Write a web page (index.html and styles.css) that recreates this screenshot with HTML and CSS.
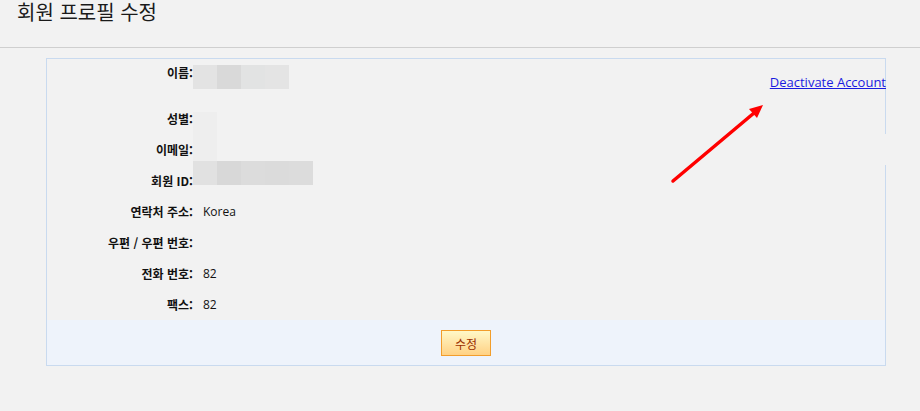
FILE: index.html
```html
<!DOCTYPE html>
<html lang="ko">
<head>
<meta charset="utf-8">
<title>회원 프로필 수정</title>
<link rel="stylesheet" href="styles.css">
</head>
<body>
<header class="page-head">
  <h1 class="page-title">회원 프로필 수정</h1>
</header>
<main class="content">
  <section class="profile-box">
    <div class="rows">
      <div class="row row-first">
        <div class="label">이름:</div>
        <div class="value"></div>
        <a class="deactivate" href="#">Deactivate Account</a>
      </div>
      <div class="row"><div class="label">성별:</div><div class="value"></div></div>
      <div class="row"><div class="label">이메일:</div><div class="value"></div></div>
      <div class="row"><div class="label">회원 ID:</div><div class="value"></div></div>
      <div class="row"><div class="label">연락처 주소:</div><div class="value">Korea</div></div>
      <div class="row"><div class="label">우편 / 우편 번호:</div><div class="value"></div></div>
      <div class="row"><div class="label">전화 번호:</div><div class="value">82</div></div>
      <div class="row"><div class="label">팩스:</div><div class="value">82</div></div>
    </div>
    <div class="actions">
      <button class="btn-edit" type="button">수정</button>
    </div>

    <div class="blur blur-name"><span class="b1"></span><span class="b2"></span><span class="b3"></span><span class="b4"></span></div>
    <div class="blur blur-faint"></div>
    <div class="blur blur-id"><span class="c1"></span><span class="c2"></span><span class="c3"></span><span class="c4"></span><span class="c5"></span></div>
    <div class="border-gap"></div>

    <svg class="arrow" width="110" height="90" viewBox="0 0 110 90" aria-hidden="true">
      <line x1="13" y1="82" x2="94" y2="14" stroke="#ff0000" stroke-width="3.5" stroke-linecap="round"/>
      <polygon points="103,6 89,10 97,19" fill="#ff0000"/>
    </svg>
  </section>
</main>
</body>
</html>
```

FILE: styles.css
```css
html, body {
  margin: 0;
  padding: 0;
}
body {
  background: #f2f2f2;
  font-family: "Noto Sans CJK KR", "Noto Sans", sans-serif;
  font-size: 12px;
  color: #111;
  width: 920px;
  height: 411px;
  overflow: hidden;
}
.page-head {
  height: 48px;
  border-bottom: 1px solid #cfcfcf;
  box-sizing: border-box;
  padding-top: 2px;
}
.page-title {
  margin: 0;
  padding-left: 17px;
  font-size: 20px;
  font-weight: normal;
  line-height: 20px;
  color: #1a1a1a;
}
.content {
  padding-top: 10px;
  padding-left: 46px;
}
.profile-box {
  position: relative;
  width: 840px;
  box-sizing: border-box;
  border: 1px solid #c9daef;
  background: #f2f2f2;
}
.rows {
  display: flex;
  flex-direction: column;
}
.row {
  display: grid;
  grid-template-columns: 146px 1fr auto;
  column-gap: 10px;
  height: 31px;
  line-height: 31px;
  align-items: start;
}
.row-first {
  height: 44px;
  line-height: 28px;
}
.label {
  text-align: right;
  font-weight: 700;
  color: #111;
  white-space: nowrap;
}
.value {
  font-family: "Open Sans", "Noto Sans CJK KR", sans-serif;
  color: #111;
}
.deactivate {
  font-family: "Open Sans", "Noto Sans CJK KR", sans-serif;
  font-size: 13px;
  color: #1a1ae0;
  text-decoration: underline;
  padding-top: 9px;
  margin-right: -1px;
  line-height: 28px;
}
.actions {
  height: 45px;
  background: #eef3fb;
  display: flex;
  justify-content: center;
  align-items: flex-start;
  padding-top: 10px;
  box-sizing: border-box;
}
.btn-edit {
  width: 50px;
  height: 26px;
  border: 1px solid #f29d2b;
  background: linear-gradient(#fff8c8, #ffd184);
  color: #9a2f00;
  font-family: "Noto Sans CJK KR", sans-serif;
  font-size: 12px;
  padding: 0;
  cursor: pointer;
}
.blur {
  position: absolute;
  display: flex;
}
.blur span {
  width: 24px;
  height: 24px;
}
.blur-name { left: 146px; top: 6px; }
.blur-name .b1 { background: #e3e3e3; }
.blur-name .b2 { background: #d9d9d9; }
.blur-name .b3 { background: #e2e3e3; }
.blur-name .b4 { background: #e4e4e4; }
.blur-faint {
  left: 146px;
  top: 53px;
  width: 24px;
  height: 49px;
  background: #eeeeee;
}
.blur-id { left: 146px; top: 102px; }
.blur-id .c1 { background: #e1e1e1; }
.blur-id .c2 { background: #d8d8d8; }
.blur-id .c3 { background: #dcdcdc; }
.blur-id .c4 { background: #dbdbdb; }
.blur-id .c5 { background: #dcdcdc; }
.border-gap {
  position: absolute;
  right: -1px;
  top: 75px;
  width: 1px;
  height: 31px;
  background: #f2f2f2;
}
.arrow {
  position: absolute;
  left: 613px;
  top: 40px;
}
```
